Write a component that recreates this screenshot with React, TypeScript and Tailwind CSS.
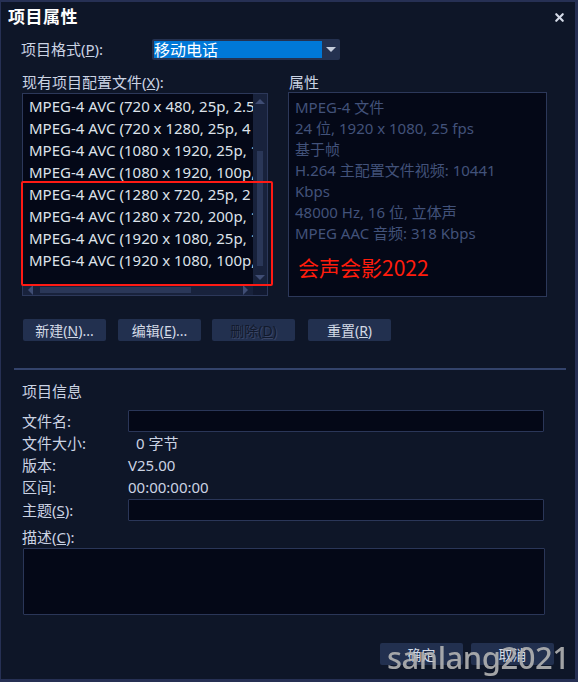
import { X } from 'lucide-react'

const profiles = [
  'MPEG-4 AVC (720 x 480, 25p, 2.5 Mbps)',
  'MPEG-4 AVC (720 x 1280, 25p, 4 Mbps)',
  'MPEG-4 AVC (1080 x 1920, 25p, 10 Mbps)',
  'MPEG-4 AVC (1080 x 1920, 100p, 20 Mbps)',
  'MPEG-4 AVC (1280 x 720, 25p, 2 Mbps)',
  'MPEG-4 AVC (1280 x 720, 200p, 12 Mbps)',
  'MPEG-4 AVC (1920 x 1080, 25p, 10 Mbps)',
  'MPEG-4 AVC (1920 x 1080, 100p, 20 Mbps)',
]

const props = [
  'MPEG-4 文件',
  '24 位, 1920 x 1080, 25 fps',
  '基于帧',
  'H.264 主配置文件视频: 10441',
  'Kbps',
  '48000 Hz, 16 位, 立体声',
  'MPEG AAC 音频: 318 Kbps',
]

function Tri({ dir, className }: { dir: 'up' | 'down' | 'left' | 'right'; className?: string }) {
  const pts = {
    up: '0,6 5,1 10,6',
    down: '0,1 10,1 5,6',
    left: '6,0 6,10 1,5',
    right: '1,0 1,10 6,5',
  }[dir]
  const vertical = dir === 'up' || dir === 'down'
  return (
    <svg width={vertical ? 10 : 7} height={vertical ? 7 : 10} className={className}>
      <polygon points={pts} fill="currentColor" />
    </svg>
  )
}

function Btn({ children, disabled, className }: { children: React.ReactNode; disabled?: boolean; className?: string }) {
  return (
    <div
      className={`h-[22px] w-[83px] rounded-[2px] bg-[#22304f] flex items-center justify-center text-[14px] ${
        disabled ? 'text-[#121a2c] [text-shadow:1px_1px_0_#3a4668]' : 'text-[#d3dae6]'
      } ${className || ''}`}
    >
      {children}
    </div>
  )
}

export default function App() {
  return (
    <div className="relative w-[578px] h-[682px] bg-[#0e1628] border-t-2 border-l border-r-[3px] border-b-[3px] border-[#263054] font-['Noto_Sans','Noto_Sans_CJK_SC',sans-serif] text-[#cbd3e3] overflow-hidden">
      {/* title */}
      <div className="h-[30px] flex items-center justify-between pl-[7px] pr-[9px]">
        <span className="text-[17px] font-bold text-white tracking-[0.5px]">项目属性</span>
        <X className="w-[13px] h-[13px] text-[#d5dbe8]" strokeWidth={4} />
      </div>

      <div className="px-[20px]">
        {/* format */}
        <div className="mt-[7px] h-[21px] flex items-center">
          <span className="w-[131px] text-[15px]">项目格式(<u>P</u>):</span>
          <div className="w-[188px] h-[21px] rounded-[2px] bg-[#243150] flex items-center">
            <div className="ml-[2px] w-[168px] h-[17px] bg-[#0078d7] flex items-center text-[16px] text-white leading-none">移动电话</div>
            <div className="flex-1 flex items-center justify-center text-[#c4ccdc]">
              <Tri dir="down" />
            </div>
          </div>
        </div>

        {/* profiles & properties */}
        <div className="mt-[12px] flex gap-[20px]">
          <div className="w-[247px] flex flex-col">
            <div className="h-[21px] flex items-center text-[15px] ml-[1px]">现有项目配置文件(<u>X</u>):</div>
            <div className="relative ml-[1px]">
              <div className="h-[203px] border border-[#2c385a] bg-[#040817] flex flex-col">
                <div className="flex-1 flex min-h-0">
                  <div className="flex-1 overflow-hidden pt-[1px]">
                    {profiles.map((p) => (
                      <div key={p} className="h-[22px] flex items-center pl-[6px] whitespace-nowrap text-[15px] text-[#dde2ea]">
                        {p}
                      </div>
                    ))}
                  </div>
                  <div className="w-[14px] bg-[#18223c] flex flex-col items-center py-[4px]">
                    <Tri dir="up" className="text-[#3f4d74]" />
                    <div className="mt-[46px] w-[6px] h-[115px] bg-[#2a3758]" />
                    <div className="flex-1" />
                    <Tri dir="down" className="text-[#3f4d74]" />
                  </div>
                </div>
                <div className="h-[10px] flex">
                  <div className="flex-1 bg-[#18223c] flex items-center px-[4px]">
                    <Tri dir="left" className="text-[#3f4d74]" />
                    <div className="ml-[6px] w-[151px] h-[6px] bg-[#2a3758]" />
                    <div className="flex-1" />
                    <Tri dir="right" className="text-[#3f4d74]" />
                  </div>
                  <div className="w-[14px] bg-[#111930]" />
                </div>
              </div>
              <div className="absolute left-[-1px] top-[88px] w-[252px] h-[105px] border-2 border-[#ff1a14] rounded-[2px]" />
            </div>
          </div>

          <div className="w-[259px] flex flex-col">
            <div className="h-[20px] flex items-center text-[15px] pl-[1px]">属性</div>
            <div className="h-[205px] border border-[#2c385a] bg-[#040817] pl-[6px] pt-[4px]">
              {props.map((p) => (
                <div key={p} className="h-[21px] flex items-center whitespace-nowrap text-[15px] text-[#42527a]">
                  {p}
                </div>
              ))}
              <div className="mt-[10px] ml-[3px] h-[28px] flex items-center text-[21px] text-[#ff1c0c] font-['Noto_Sans_CJK_SC',sans-serif]">
                会声会影2022
              </div>
            </div>
          </div>
        </div>

        {/* buttons */}
        <div className="mt-[22px] flex ml-[2px]">
          <Btn>新建(<u>N</u>)...</Btn>
          <Btn className="ml-[12px]">编辑(<u>E</u>)...</Btn>
          <Btn disabled className="ml-[11px]">删除(<u>D</u>)</Btn>
          <Btn className="ml-[13px]">重置(<u>R</u>)</Btn>
        </div>

        <div className="mt-[27px] -ml-[7px] w-[552px] h-[2px] bg-[#33436b]" />

        <div className="mt-[11px] h-[20px] flex items-center text-[15px] ml-[1px]">项目信息</div>

        {/* info */}
        <div className="mt-[9px] text-[15px] ml-[1px]">
          <div className="h-[22px] flex items-center">
            <span className="w-[106px]">文件名:</span>
            <div className="w-[416px] h-[22px] border border-[#2a3658] bg-[#040817] rounded-[1px]" />
          </div>
          <div className="h-[22px] flex items-center">
            <span className="w-[106px]">文件大小:</span>
            <span className="pl-[8px]">0 字节</span>
          </div>
          <div className="h-[22px] flex items-center">
            <span className="w-[106px]">版本:</span>
            <span>V25.00</span>
          </div>
          <div className="h-[22px] flex items-center">
            <span className="w-[106px]">区间:</span>
            <span>00:00:00:00</span>
          </div>
          <div className="mt-[1px] h-[22px] flex items-center">
            <span className="w-[106px]">主题(<u>S</u>):</span>
            <div className="w-[416px] h-[22px] border border-[#2a3658] bg-[#040817] rounded-[1px]" />
          </div>
          <div className="mt-[5px] h-[22px] flex items-center">描述(<u>C</u>):</div>
          <div className="w-[522px] h-[67px] border border-[#2a3658] bg-[#040817] rounded-[1px] ml-[1px]" />
        </div>

        <div className="mt-[28px] flex justify-end pr-[1px]">
          <Btn className="w-[82px]">确定</Btn>
          <Btn className="ml-[8px] w-[82px]">取消</Btn>
        </div>
      </div>

      <div className="absolute left-[386px] top-[635px] text-[31px] leading-[40px] font-medium text-[#b3b3b3] opacity-90 font-['Noto_Sans',sans-serif] tracking-[-0.5px]">
        sanlang2021
      </div>
    </div>
  )
}
